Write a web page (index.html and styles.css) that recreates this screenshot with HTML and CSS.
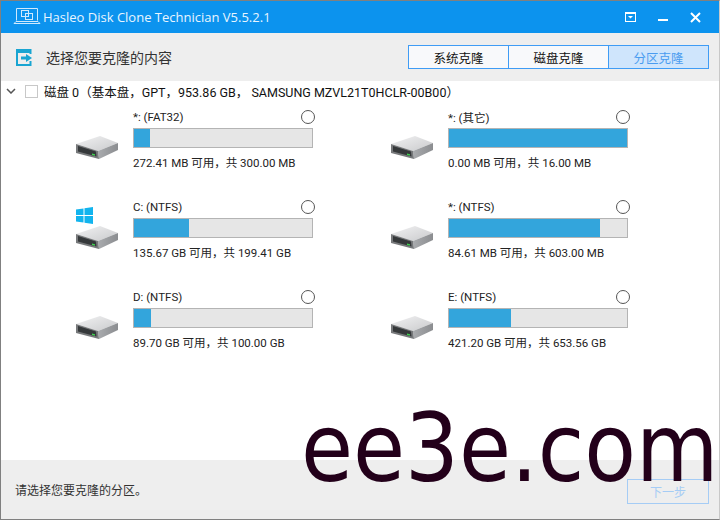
FILE: index.html
```html
<!DOCTYPE html>
<html lang="zh-CN">
<head>
  <meta charset="UTF-8" />
  <title>Hasleo Disk Clone Technician</title>
  <link rel="stylesheet" href="styles.css">
</head>
<body>
  <svg class="defs" width="0" height="0">
    <defs>
      <linearGradient id="diskTop" x1="0" y1="0" x2="1" y2="1">
        <stop offset="0" stop-color="#f2f2f3"/>
        <stop offset="1" stop-color="#c9cacc"/>
      </linearGradient>
      <linearGradient id="diskSide" x1="0" y1="0" x2="1" y2="0">
        <stop offset="0" stop-color="#a9abae"/>
        <stop offset="1" stop-color="#8b8d90"/>
      </linearGradient>
      <symbol id="disk" viewBox="0 0 44 26">
        <path d="M1 9 25 1 43 8 23 16Z" fill="url(#diskTop)"/>
        <path d="M23 16 43 8V15L24 24Z" fill="url(#diskSide)"/>
        <path d="M1 9 23 16 24 24 1 18Z" fill="#77797b"/>
        <path d="M3 11 21 16.500 21.500 21.500 3 16.500Z" fill="#35383a"/>
        <path d="M17 18.500 20 19.300V20.800L17 20Z" fill="#3fd04f"/>
      </symbol>
    </defs>
  </svg>

  <div class="window">
    <header class="titlebar">
      <svg class="app-icon" width="30" height="22" viewBox="0 0 30 22" fill="none" stroke="#cfe9fd" stroke-width="1">
        <path d="M3.500 14.500V2.500H24.500V14.500"/>
        <path d="M1 17.500H27L25 15.500H3Z"/>
        <rect x="8.500" y="4.500" width="7" height="6"/>
        <rect x="12.500" y="7.500" width="7" height="6"/>
      </svg>
      <span class="app-title">Hasleo Disk Clone Technician V5.5.2.1</span>
      <div class="win-buttons">
        <svg width="11" height="10" viewBox="0 0 11 10" fill="none">
          <rect x="0.500" y="0.500" width="10" height="9" stroke="#fff"/>
          <rect x="1" y="1" width="9" height="1" fill="#fff"/>
          <path d="M3 4H8L5.500 6.500Z" fill="#fff"/>
        </svg>
        <svg width="10" height="10" viewBox="0 0 10 10"><rect x="0" y="7" width="10" height="2" fill="#fff"/></svg>
        <svg width="11" height="11" viewBox="0 0 11 11"><path d="M1 1 10 10M10 1 1 10" stroke="#fff" stroke-width="2"/></svg>
      </div>
    </header>

    <div class="toolbar">
      <svg class="step-icon" width="16" height="17" viewBox="0 0 16 17" fill="none">
        <path d="M14.500 5V1H1V16H14.500V12" stroke="#19a5d2" stroke-width="2"/>
        <rect x="1" y="1" width="14" height="3" fill="#19a5d2"/>
        <path d="M5 7.500H10V5L16 9 10 13V10.500H5Z" fill="#19a5d2"/>
      </svg>
      <span class="step-title">选择您要克隆的内容</span>
      <div class="tabs">
        <span class="tab">系统克隆</span>
        <span class="tab">磁盘克隆</span>
        <span class="tab active">分区克隆</span>
      </div>
    </div>

    <main class="content">
      <div class="disk-row">
        <svg class="chevron" width="10" height="6" viewBox="0 0 10 6" fill="none"><path d="M1 1 5 5 9 1" stroke="#555" stroke-width="1.500"/></svg>
        <span class="checkbox"></span>
        <span>磁盘 0（基本盘，GPT，953.86 GB， SAMSUNG MZVL21T0HCLR-00B00）</span>
      </div>

      <div class="partitions">
        <div class="part">
          <svg class="disk-icon" width="44" height="26"><use href="#disk"/></svg>
          <div class="part-info">
            <div class="part-head"><span>*: (FAT32)</span><span class="radio"></span></div>
            <div class="bar"><div class="bar-fill" style="width: 9.2%"></div></div>
            <div class="part-size">272.41 MB 可用，共 300.00 MB</div>
          </div>
        </div>
        <div class="part">
          <svg class="disk-icon" width="44" height="26"><use href="#disk"/></svg>
          <div class="part-info">
            <div class="part-head"><span>*: (其它)</span><span class="radio"></span></div>
            <div class="bar"><div class="bar-fill" style="width: 100%"></div></div>
            <div class="part-size">0.00 MB 可用，共 16.00 MB</div>
          </div>
        </div>
        <div class="part">
          <div class="disk-wrap">
            <svg class="win-logo" width="17" height="17" viewBox="0 0 17 17" fill="#12b4ee">
              <path d="M0 2.500 7.500 1.400V8H0Z"/>
              <path d="M8.500 1.300 17 0V8H8.500Z"/>
              <path d="M0 9H7.500V15.500L0 14.500Z"/>
              <path d="M8.500 9H17V17L8.500 15.700Z"/>
            </svg>
            <svg class="disk-icon" width="44" height="26"><use href="#disk"/></svg>
          </div>
          <div class="part-info">
            <div class="part-head"><span>C: (NTFS)</span><span class="radio"></span></div>
            <div class="bar"><div class="bar-fill" style="width: 31%"></div></div>
            <div class="part-size">135.67 GB 可用，共 199.41 GB</div>
          </div>
        </div>
        <div class="part">
          <svg class="disk-icon" width="44" height="26"><use href="#disk"/></svg>
          <div class="part-info">
            <div class="part-head"><span>*: (NTFS)</span><span class="radio"></span></div>
            <div class="bar"><div class="bar-fill" style="width: 85%"></div></div>
            <div class="part-size">84.61 MB 可用，共 603.00 MB</div>
          </div>
        </div>
        <div class="part">
          <svg class="disk-icon" width="44" height="26"><use href="#disk"/></svg>
          <div class="part-info">
            <div class="part-head"><span>D: (NTFS)</span><span class="radio"></span></div>
            <div class="bar"><div class="bar-fill" style="width: 9.6%"></div></div>
            <div class="part-size">89.70 GB 可用，共 100.00 GB</div>
          </div>
        </div>
        <div class="part">
          <svg class="disk-icon" width="44" height="26"><use href="#disk"/></svg>
          <div class="part-info">
            <div class="part-head"><span>E: (NTFS)</span><span class="radio"></span></div>
            <div class="bar"><div class="bar-fill" style="width: 35%"></div></div>
            <div class="part-size">421.20 GB 可用，共 653.56 GB</div>
          </div>
        </div>
      </div>
    </main>

    <footer class="footer">
      <span class="hint">请选择您要克隆的分区。</span>
      <span class="next">下一步</span>
    </footer>
  </div>

  <div class="watermark">ee3e.com</div>
</body>
</html>
```

FILE: styles.css
```css
:root {
  --blue: #0c93ee;
  --panel: #eeeeee;
  --tab-border: #3f9cf5;
  --text: #222;
}

html, body {
  margin: 0;
  height: 100%;
  overflow: hidden;
}

body {
  position: relative;
  font-family: Roboto, "Noto Sans CJK SC", sans-serif;
  font-size: 11.5px;
  color: var(--text);
  background: #fff;
}

.defs {
  position: absolute;
}

.window {
  box-sizing: border-box;
  height: 520px;
  display: flex;
  flex-direction: column;
  border: 1px solid #808080;
  border-right-color: #c8c8c8;
}

.titlebar {
  height: 32px;
  flex: none;
  display: flex;
  align-items: center;
  padding-left: 12px;
  background: var(--blue);
  color: #e8f5ff;
}

.app-title {
  font-family: "Open Sans", sans-serif;
  font-size: 13px;
}

.win-buttons {
  margin-left: auto;
  display: flex;
  align-items: center;
  gap: 22px;
  padding-right: 18px;
}

.toolbar {
  height: 48px;
  flex: none;
  display: flex;
  align-items: center;
  padding: 0 10px 0 15px;
  background: var(--panel);
}

.step-title {
  margin-left: 14px;
  font-size: 14px;
  color: #333;
}

.tabs {
  margin-left: auto;
  display: flex;
  height: 24px;
  box-sizing: border-box;
  border: 1px solid var(--tab-border);
  font-size: 12.5px;
}

.tab {
  width: 99px;
  display: flex;
  align-items: center;
  justify-content: center;
  background: #f8f9fb;
  color: #111;
  border-left: 1px solid var(--tab-border);
}

.tab:first-child {
  border-left: 0;
}

.tab.active {
  background: #cfe5fc;
  color: #4a9cf0;
}

.content {
  flex: 1;
  padding-top: 3px;
}

.disk-row {
  height: 14px;
  display: flex;
  align-items: center;
  padding-left: 5px;
  font-size: 12.5px;
  color: #111;
}

.chevron {
  margin-right: 9px;
}

.checkbox {
  box-sizing: border-box;
  width: 13px;
  height: 13px;
  margin-right: 6px;
  border: 1px solid #c8c8c8;
  background: #fff;
}

.partitions {
  display: grid;
  grid-template-columns: repeat(2, 315px);
  grid-auto-rows: 90px;
  padding: 11px 0 0 74px;
}

.part {
  display: flex;
  align-items: flex-start;
}

.disk-icon {
  display: block;
}

.disk-wrap {
  position: relative;
}

.win-logo {
  position: absolute;
  left: 1px;
  top: -18px;
}

.part > .disk-icon,
.disk-wrap {
  margin: 26px 14px 0 0;
}

.part-info {
  width: 180px;
}

.part-head {
  display: flex;
  justify-content: space-between;
  align-items: center;
  height: 16px;
  margin-bottom: 3px;
}

.radio {
  box-sizing: border-box;
  width: 14px;
  height: 14px;
  margin-right: -2px;
  border: 1px solid #555;
  border-radius: 50%;
}

.bar {
  box-sizing: border-box;
  height: 20px;
  border: 1px solid #b4b4b4;
  background: #e6e6e6;
}

.bar-fill {
  height: 100%;
  background: #33a5dc;
}

.part-size {
  margin-top: 7px;
  height: 16px;
  line-height: 16px;
}

.footer {
  height: 59px;
  flex: none;
  display: flex;
  align-items: center;
  justify-content: space-between;
  padding: 0 10px 0 14px;
  background: var(--panel);
  font-size: 12px;
}

.hint {
  color: #333;
}

.next {
  box-sizing: border-box;
  width: 82px;
  height: 25px;
  margin-top: 4px;
  display: flex;
  align-items: center;
  justify-content: center;
  border: 1px solid #a5ccf5;
  color: #a5ccf5;
}

.watermark {
  position: absolute;
  left: 301px;
  top: 394px;
  font-family: "DejaVu Sans Condensed", "DejaVu Sans", sans-serif;
  font-stretch: condensed;
  font-size: 94px;
  line-height: 110px;
  color: #23001a;
  white-space: nowrap;
}
```
